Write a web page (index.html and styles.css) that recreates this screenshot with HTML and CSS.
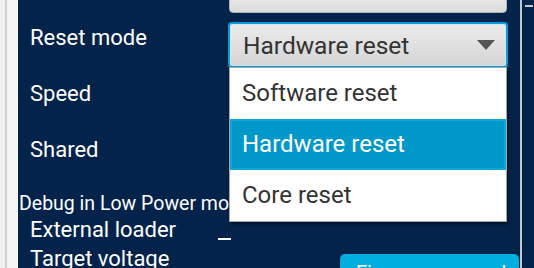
FILE: index.html
```html
<!DOCTYPE html>
<html lang="en">
<head>
<meta charset="UTF-8">
<meta name="viewport" content="width=device-width, initial-scale=1.0">
<title>ST-LINK configuration</title>
<link rel="stylesheet" href="styles.css">
</head>
<body>
    <div class="app">
        <div class="rail"></div>
        <div class="panel">
            <div class="form">
                <div class="row row-top">
                    <div class="label"></div>
                    <div class="control"><div class="button-top"></div></div>
                </div>
                <div class="row row-field">
                    <div class="label">Reset mode</div>
                    <div class="control">
                        <div class="combo">
                            <span class="combo-value">Hardware reset</span>
                            <span class="combo-arrow"></span>
                        </div>
                    </div>
                </div>
                <div class="row row-field">
                    <div class="label">Speed</div>
                </div>
                <div class="row row-field">
                    <div class="label">Shared</div>
                </div>
                <div class="row row-debug">
                    <div class="label label-small">Debug in Low Power mode</div>
                </div>
                <div class="row row-line">
                    <div class="label">External loader</div>
                    <div class="value-line"></div>
                </div>
                <div class="row row-line">
                    <div class="label">Target voltage</div>
                    <div class="button-upgrade">Firmware upgrade</div>
                </div>
            </div>

            <ul class="popup">
                <li class="popup-item">Software reset</li>
                <li class="popup-item selected">Hardware reset</li>
                <li class="popup-item">Core reset</li>
            </ul>
        </div>
        <div class="divider"></div>
        <div class="side"><div class="side-mark"></div></div>
    </div>
</body>
</html>
```

FILE: styles.css
```css
body {
    margin: 0;
    background-color: #f0f0f0;
    font-family: Roboto, "Liberation Sans", sans-serif;
    overflow: hidden;
}
.app {
    display: flex;
    height: 268px;
}
.rail {
    width: 11px;
    margin-left: 5px;
    border-left: 2px solid #d0d0d0;
    background-color: #f5f5f5;
}
.panel {
    position: relative;
    flex: 1;
    background-color: #03234b;
    overflow: hidden;
}
.divider {
    width: 2px;
    background-color: #c4c8ce;
}
.side {
    width: 12px;
    background-color: #03234b;
}
.side-mark {
    margin: 5px 1px 0 3px;
    height: 2px;
    background-color: #c4c8ce;
}
.form {
    margin-top: -22px;
    padding-left: 12px;
}
.row {
    display: flex;
    align-items: flex-start;
}
.label {
    width: 198px;
    flex-shrink: 0;
    color: #fff;
    font-size: 22px;
    white-space: nowrap;
}
.control {
    width: 280px;
}
.row-top {
    height: 38px;
}
.button-top {
    height: 33px;
    margin-left: 1px;
    width: 276px;
    border: 1px solid #aeb1b5;
    border-radius: 4px;
    background: linear-gradient(#f2f2f2, #dcdcdc);
}
.row-field {
    height: 56px;
}
.row-field .label {
    line-height: 44px;
}
.combo {
    display: flex;
    align-items: center;
    justify-content: space-between;
    margin-top: 6px;
    height: 42px;
    border: 2px solid #0a9bd8;
    border-radius: 4px;
    background: linear-gradient(#ebebeb, #d5d5d5);
    box-shadow: inset 0 0 0 1px #cfe7f2;
    padding: 0 11px 0 13px;
}
.combo-value {
    color: #333;
    font-size: 24.5px;
}
.combo-arrow {
    width: 0;
    height: 0;
    border-left: 9px solid transparent;
    border-right: 9px solid transparent;
    border-top: 10px solid #555;
}
.row-debug {
    height: 31px;
}
.label-small {
    margin-left: -11px;
    font-size: 19.5px;
    line-height: 40px;
}
.row-line {
    height: 29px;
}
.row-line .label {
    line-height: 29px;
}
.value-line {
    width: 13px;
    height: 2px;
    margin: 23px 0 0 -10px;
    background-color: #fff;
}
.button-upgrade {
    margin-left: auto;
    margin-top: 10px;
    width: 179px;
    height: 40px;
    margin-right: 1px;
    border-radius: 5px;
    background-color: #00aee0;
    color: #fff;
    font-size: 20px;
    line-height: 38px;
    padding-left: 16px;
    box-sizing: border-box;
}
.popup {
    position: absolute;
    left: 211px;
    top: 67px;
    width: 276px;
    margin: 0;
    padding: 0;
    list-style: none;
    background-color: #fff;
    border: 1px solid #a6a6a6;
    box-shadow: 1px 2px 3px rgba(0, 0, 0, 0.45);
}
.popup-item {
    height: 51px;
    line-height: 51px;
    padding-left: 12px;
    color: #333;
    font-size: 24px;
}
.popup-item.selected {
    background-color: #0097ca;
    color: #fff;
    box-shadow: inset 0 0 0 2px #10a6da;
}
```
